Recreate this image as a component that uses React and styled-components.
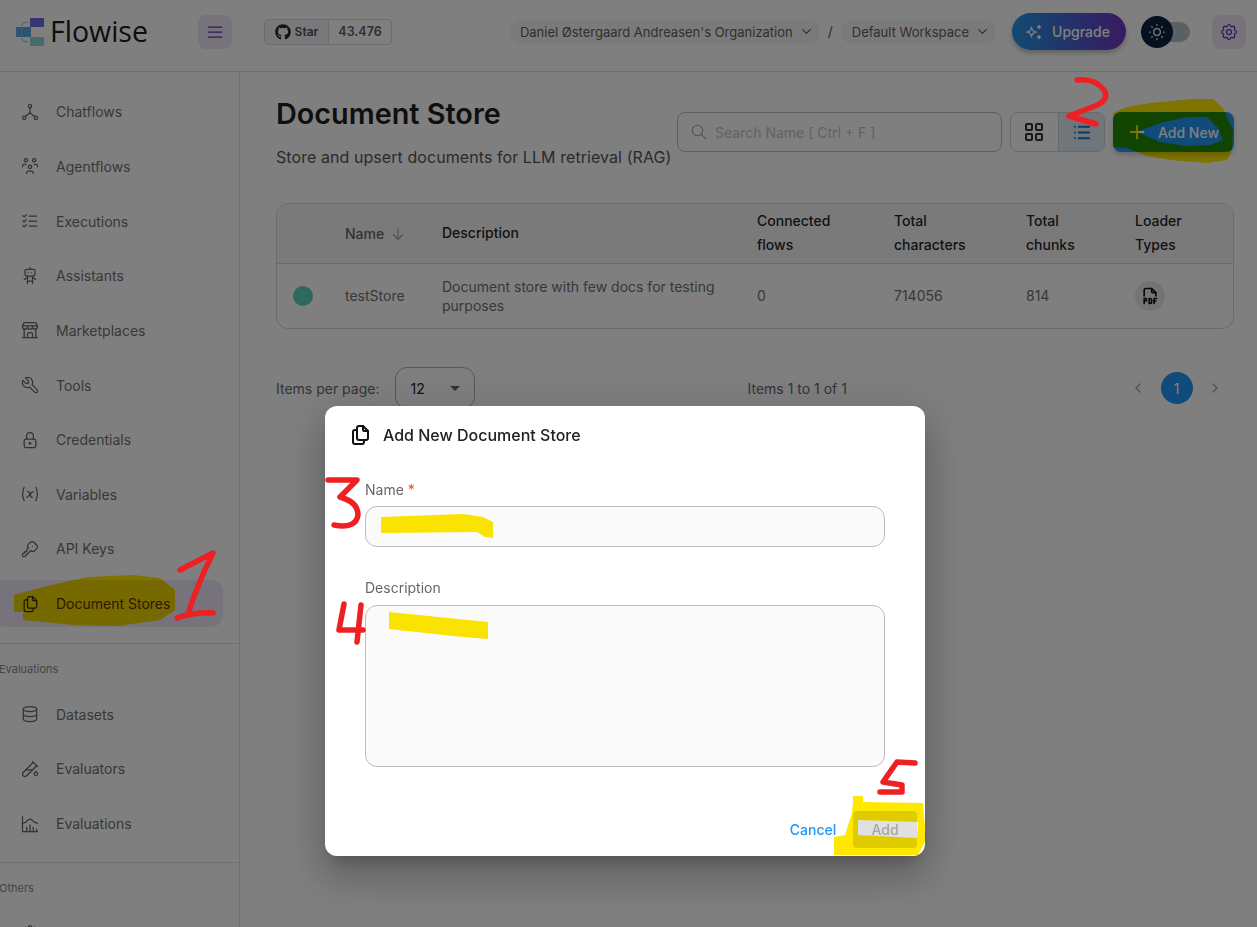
import React from 'react';
import styled, { createGlobalStyle } from 'styled-components';
import { FaGithub } from 'react-icons/fa';
import {
  TbHierarchy, TbUsersGroup, TbListCheck, TbRobot, TbBuildingStore, TbTool, TbLock, TbVariable,
  TbKey, TbFiles, TbDatabase, TbTestPipe, TbChartHistogram, TbSettings, TbMenu2, TbChevronDown,
  TbSparkles, TbSun, TbSearch, TbLayoutGrid, TbList, TbPlus, TbArrowDown, TbFileTypePdf,
  TbChevronLeft, TbChevronRight,
} from 'react-icons/tb';

const GlobalStyle = createGlobalStyle`
  html, body {
    margin: 0;
    height: 927px;
    overflow: hidden;
    background: #fff;
    font-family: Inter, "Liberation Sans", sans-serif;
  }
  * { box-sizing: border-box; }
`;

const Page = styled.div`
  width: 1257px;
  height: 927px;
  overflow: hidden;
  display: flex;
  flex-direction: column;
`;

const Header = styled.header`
  height: 72px;
  flex: none;
  display: flex;
  align-items: center;
  padding: 0 11px 8px 16px;
  border-bottom: 1px solid #e0e0e0;
`;

const Brand = styled.div`
  width: 182px;
  display: flex;
  align-items: center;
  gap: 5px;
`;

const BrandName = styled.span`
  font-family: "Open Sans", sans-serif;
  font-size: 28.5px;
  color: #1c1c1c;
  line-height: 1;
`;

const SoftButton = styled.div`
  width: 34px;
  height: 34px;
  border-radius: 8px;
  background: #ede7f6;
  color: #5e35b1;
  display: flex;
  align-items: center;
  justify-content: center;
  svg { stroke-width: 1.5; }
`;

const StarBox = styled.div`
  margin-left: 32px;
  height: 26px;
  display: flex;
  border: 1px solid #d5d8dc;
  border-radius: 4px;
  font-size: 12px;
  font-weight: 600;
  color: #57606a;
`;

const StarLabel = styled.div`
  width: 64px;
  display: flex;
  align-items: center;
  justify-content: center;
  gap: 4px;
  background: #f1f3f5;
  border-right: 1px solid #d5d8dc;
  color: #4c535b;
  svg { color: #24292f; }
`;

const StarCount = styled.div`
  width: 62px;
  display: flex;
  align-items: center;
  justify-content: center;
  font-size: 12.5px;
`;

const RightGroup = styled.div`
  margin-left: auto;
  display: flex;
  align-items: center;
`;

const Pill = styled.div`
  height: 24px;
  padding: 0 6px 0 11px;
  display: flex;
  align-items: center;
  gap: 6px;
  border-radius: 12px;
  background: #f5f5f5;
  font-size: 13px;
  color: #5f5f5f;
  white-space: nowrap;
`;

const Slash = styled.span`
  width: 21px;
  text-align: center;
  font-size: 14px;
  color: #616161;
`;

const Upgrade = styled.div`
  margin-left: 16px;
  width: 114px;
  height: 37px;
  padding-right: 4px;
  border-radius: 19px;
  display: flex;
  align-items: center;
  justify-content: center;
  gap: 8px;
  font-size: 14px;
  font-weight: 500;
  color: #fff;
  background: linear-gradient(90deg, #2196e8, #6f35c0);
  box-shadow: 0 3px 5px rgba(0, 0, 0, 0.25);
  svg { stroke-width: 1.5; }
`;

const Switch = styled.div`
  margin: 0 22px 0 15px;
  width: 49px;
  height: 32px;
  position: relative;
  display: flex;
  align-items: center;
  justify-content: flex-end;
`;

const SwitchTrack = styled.div`
  width: 34px;
  height: 20px;
  border-radius: 10px;
  background: #b5c2c8;
`;

const SwitchKnob = styled.div`
  position: absolute;
  left: 0;
  top: 0;
  width: 32px;
  height: 32px;
  border-radius: 50%;
  background: #0a2240;
  color: #fff;
  display: flex;
  align-items: center;
  justify-content: center;
  svg { stroke-width: 1.5; }
`;

const Body = styled.div`
  flex: 1;
  min-height: 0;
  display: flex;
`;

const Sidebar = styled.aside`
  width: 240px;
  flex: none;
  padding: 16.4px 16px 0 0;
  border-right: 1px solid #e0e0e0;
  overflow: hidden;
`;

const NavItem = styled.div`
  height: 46.67px;
  margin: 0 0 8px -6px;
  padding-left: 26px;
  display: flex;
  align-items: center;
  gap: 16px;
  font-size: 14px;
  border-radius: 12px;
  color: ${(p) => (p.$active ? '#5e35b1' : '#707070')};
  background: ${(p) => (p.$active ? '#ede7f6' : 'transparent')};
  svg {
    flex: none;
    stroke-width: 1.5;
    color: ${(p) => (p.$active ? '#333' : '#666')};
  }
`;

const NavDivider = styled.div`
  margin: ${(p) => p.$gap}px -16px 0 0;
  border-top: 1px solid #e0e0e0;
`;

const NavCaption = styled.div`
  margin: 19px 0 15px -1px;
  height: 13px;
  line-height: 13px;
  font-size: 11px;
  color: #8a8a8a;
`;

const Main = styled.main`
  flex: 1;
  min-width: 0;
  padding: 25px 23px 0 36px;
`;

const TopRow = styled.div`
  height: 106px;
  display: flex;
  align-items: flex-start;
`;

const TitleBlock = styled.div`
  flex: none;
`;

const Title = styled.h1`
  margin: 0;
  font-size: 28.8px;
  line-height: 34px;
  font-weight: 600;
  color: #1f1f1f;
`;

const Subtitle = styled.p`
  margin: 17px 0 0;
  font-size: 16px;
  letter-spacing: 0.07px;
  line-height: 18px;
  color: #555;
`;

const Controls = styled.div`
  margin: 15px 0 0 auto;
  display: flex;
  gap: 8px;
`;

const Search = styled.div`
  width: 325px;
  height: 40px;
  padding-left: 12px;
  display: flex;
  align-items: center;
  gap: 7px;
  border: 1px solid #bdbdbd;
  border-radius: 8px;
  font-size: 14px;
  color: #c4c4c4;
  svg { color: #a8a8a8; stroke-width: 1.5; }
`;

const Toggle = styled.div`
  display: flex;
  height: 40px;
  border: 1px solid #d0d0d0;
  border-radius: 8px;
  overflow: hidden;
`;

const ToggleCell = styled.div`
  width: 46.5px;
  display: flex;
  align-items: center;
  justify-content: center;
  color: ${(p) => (p.$on ? '#1976d2' : '#333')};
  background: ${(p) => (p.$on ? '#e3ecf5' : 'transparent')};
  border-left: ${(p) => (p.$on ? '1px solid #d0d0d0' : 'none')};
`;

const AddNew = styled.div`
  width: 121px;
  height: 40px;
  padding-right: 2px;
  border-radius: 8px;
  background: #2196f3;
  color: #fff;
  display: flex;
  align-items: center;
  justify-content: center;
  gap: 10px;
  font-size: 14px;
  font-weight: 500;
  box-shadow: 0 3px 5px rgba(0, 0, 0, 0.2);
`;

const Table = styled.div`
  width: 958px;
  border: 1px solid #d6d6d6;
  border-radius: 12px;
  overflow: hidden;
  font-size: 14px;
`;

const Row = styled.div`
  display: grid;
  grid-template-columns: 52px 97px 315px 137px 132px 109px 1fr;
  align-items: center;
`;

const HeadRow = styled(Row)`
  height: 60px;
  padding-bottom: 2px;
  background: #f5f5f5;
  border-bottom: 1px solid #d6d6d6;
  color: #262626;
  font-weight: 500;
  line-height: 24px;
`;

const DataRow = styled(Row)`
  height: 64px;
  color: #707070;
  line-height: 19.5px;
`;

const Cell = styled.div`
  padding-left: 16px;
  padding-right: 16px;
`;

const SortCell = styled(Cell)`
  display: flex;
  align-items: center;
  gap: 5px;
  color: #666;
  padding-top: 2px;
  svg { color: #999; stroke-width: 1.5; }
`;

const StatusDot = styled.div`
  width: 20px;
  height: 20px;
  border-radius: 50%;
  background: #5fd0bd;
`;

const Loader = styled.div`
  width: 30px;
  height: 30px;
  border-radius: 50%;
  background: #e8e8e8;
  color: #111;
  display: flex;
  align-items: center;
  justify-content: center;
`;

const Pager = styled.div`
  width: 958px;
  margin-top: 38px;
  height: 42px;
  padding-right: 11px;
  display: flex;
  align-items: center;
  font-size: 14px;
  color: #6a6a6a;
`;

const PerPage = styled.div`
  width: 80px;
  height: 42px;
  margin-left: 16px;
  padding: 0 14px;
  display: flex;
  align-items: center;
  justify-content: space-between;
  border: 1px solid #b0b0b0;
  border-radius: 12px;
  color: #222;
`;

const Caret = styled.span`
  width: 0;
  height: 0;
  border-left: 5px solid transparent;
  border-right: 5px solid transparent;
  border-top: 5px solid #666;
`;

const Range = styled.div`
  margin-left: 272px;
`;

const Pages = styled.div`
  margin-left: auto;
  display: flex;
  align-items: center;
  gap: 14.5px;
  color: #a8a8a8;
`;

const PageNumber = styled.div`
  width: 32px;
  height: 32px;
  border-radius: 50%;
  background: #2196f3;
  color: #fff;
  display: flex;
  align-items: center;
  justify-content: center;
`;

const Overlay = styled.div`
  position: fixed;
  inset: 0;
  padding: 406px 0 0 325px;
  background: rgba(0, 0, 0, 0.5);
`;

const Modal = styled.div`
  width: 600px;
  height: 450px;
  background: #fff;
  border-radius: 12px;
  display: flex;
  flex-direction: column;
  box-shadow: 0 11px 15px -7px rgba(0, 0, 0, 0.2), 0 24px 38px 3px rgba(0, 0, 0, 0.14),
    0 9px 46px 8px rgba(0, 0, 0, 0.12);
`;

const ModalTitle = styled.div`
  height: 58px;
  padding-left: 23px;
  display: flex;
  align-items: center;
  gap: 11px;
  font-size: 16px;
  font-weight: 500;
  color: #212121;
`;

const Form = styled.div`
  padding: 17px 40px 0;
  flex: 1;
`;

const Label = styled.div`
  height: 17px;
  line-height: 17px;
  font-size: 14px;
  color: #666;
  margin-bottom: ${(p) => p.$gap}px;
`;

const Required = styled.span`
  color: #f44336;
`;

const Field = styled.div`
  height: ${(p) => p.$height}px;
  margin-bottom: 32px;
  background: #fafafa;
  border: 1px solid #bdbdbd;
  border-radius: 12px;
`;

const Actions = styled.div`
  padding: 0 8px 8px;
  display: flex;
  justify-content: flex-end;
  align-items: center;
  gap: 9px;
  font-size: 14px;
  font-weight: 500;
`;

const Cancel = styled.div`
  width: 62px;
  text-align: center;
  color: #2196f3;
`;

const Add = styled.div`
  width: 64px;
  height: 37px;
  border-radius: 4px;
  background: #e0e0e0;
  color: #a6a6a6;
  display: flex;
  align-items: center;
  justify-content: center;
`;

const Highlighter = styled.svg`
  position: fixed;
  inset: 0;
  pointer-events: none;
  mix-blend-mode: multiply;
  fill: #ffe800;
  fill-rule: evenodd;
`;

const RedPen = styled.svg`
  position: fixed;
  inset: 0;
  pointer-events: none;
  fill: none;
  stroke: #ee2024;
  stroke-width: 5.5px;
  stroke-linecap: round;
  stroke-linejoin: round;
`;

const navTop = [
  ['Chatflows', TbHierarchy],
  ['Agentflows', TbUsersGroup],
  ['Executions', TbListCheck],
  ['Assistants', TbRobot],
  ['Marketplaces', TbBuildingStore],
  ['Tools', TbTool],
  ['Credentials', TbLock],
  ['Variables', TbVariable],
  ['API Keys', TbKey],
  ['Document Stores', TbFiles],
];

const navEval = [
  ['Datasets', TbDatabase],
  ['Evaluators', TbTestPipe],
  ['Evaluations', TbChartHistogram],
];

const highlights = [
  'M14 595 L43 587 L87 577 L133 575 L160 578 L175 590 L175 610 L160 620 L117 626 L73 625 L23 620 L23 612 L14 612 Z',
  'M1113 113 L1127 107 L1150 103 L1193 99 L1213 99 L1223 108 L1233 130 L1232 150 L1227 160 L1207 163 L1170 160 L1147 156 L1127 148 L1113 147 Z M1137 132 L1160 123 L1187 117 L1207 117 L1218 128 L1223 140 L1210 145 L1187 146 L1160 142 Z',
  'M381 517 L463 514 L483 517 L493 522 L493 538 L485 537 L477 532 L381 533 Z',
  'M389 612 L488 622 L488 639 L453 636 L389 629 Z',
  'M853 802 L853 796 L863 796 L863 802 L923 803 L926 840 L918 855 L834 855 L834 837 L845 835 L852 813 Z M858 820 L918 822 L917 838 L858 835 Z',
];

const penStrokes = [
  'M180 570 L213 553 Q197 585 188 614 M177 618 Q195 612 213 613',
  'M1077 80 Q1095 78 1104 90 Q1110 100 1095 106 L1069 116 L1096 124',
  'M328 480 L357 480 L340 497 Q358 502 358 515 Q356 529 334 525',
  'M344 604 L339 630 L363 630 M361 605 L357 642',
  'M915 763 L897 762 L883 782 L902 785 L902 792 L880 792',
];

export default function App() {
  return (
    <>
      <GlobalStyle />
      <Page>
        <Header>
          <Brand>
            <svg width="29" height="30" viewBox="0 0 29 30">
              <rect x="14" y="1" width="14" height="9" rx="1" fill="#6a6ae6" />
              <rect x="0" y="10" width="15" height="10" rx="1" fill="#5ca8e4" />
              <rect x="14" y="20" width="14" height="9" rx="1" fill="#8fd4d6" />
              <path d="M5 9 Q7 5 12 5 M5 21 Q7 25 12 25" fill="none" stroke="#8fb8d0" strokeWidth="1" />
            </svg>
            <BrandName>Flowise</BrandName>
          </Brand>
          <SoftButton><TbMenu2 size={20} /></SoftButton>
          <StarBox>
            <StarLabel><FaGithub size={16} />Star</StarLabel>
            <StarCount>43.476</StarCount>
          </StarBox>
          <RightGroup>
            <Pill>Daniel Østergaard Andreasen's Organization<TbChevronDown size={15} /></Pill>
            <Slash>/</Slash>
            <Pill>Default Workspace<TbChevronDown size={15} /></Pill>
            <Upgrade><TbSparkles size={20} />Upgrade</Upgrade>
            <Switch>
              <SwitchTrack />
              <SwitchKnob><TbSun size={20} /></SwitchKnob>
            </Switch>
            <SoftButton><TbSettings size={20} /></SoftButton>
          </RightGroup>
        </Header>
        <Body>
          <Sidebar>
            {navTop.map(([label, Icon]) => (
              <NavItem key={label} $active={label === 'Document Stores'}>
                <Icon size={20} />{label}
              </NavItem>
            ))}
            <NavDivider $gap={16} />
            <NavCaption>Evaluations</NavCaption>
            {navEval.map(([label, Icon]) => (
              <NavItem key={label}><Icon size={20} />{label}</NavItem>
            ))}
            <NavDivider $gap={15} />
            <NavCaption>Others</NavCaption>
            <NavItem><TbSettings size={20} /></NavItem>
          </Sidebar>
          <Main>
            <TopRow>
              <TitleBlock>
                <Title>Document Store</Title>
                <Subtitle>Store and upsert documents for LLM retrieval (RAG)</Subtitle>
              </TitleBlock>
              <Controls>
                <Search><TbSearch size={18} />Search Name [ Ctrl + F ]</Search>
                <Toggle>
                  <ToggleCell><TbLayoutGrid size={24} /></ToggleCell>
                  <ToggleCell $on><TbList size={23} /></ToggleCell>
                </Toggle>
                <AddNew><TbPlus size={22} />Add New</AddNew>
              </Controls>
            </TopRow>
            <Table>
              <HeadRow>
                <Cell />
                <SortCell>Name <TbArrowDown size={18} /></SortCell>
                <Cell>Description</Cell>
                <Cell>Connected flows</Cell>
                <Cell>Total characters</Cell>
                <Cell>Total chunks</Cell>
                <Cell>Loader Types</Cell>
              </HeadRow>
              <DataRow>
                <Cell><StatusDot /></Cell>
                <Cell>testStore</Cell>
                <Cell>Document store with few docs for testing purposes</Cell>
                <Cell>0</Cell>
                <Cell>714056</Cell>
                <Cell>814</Cell>
                <Cell><Loader><TbFileTypePdf size={20} /></Loader></Cell>
              </DataRow>
            </Table>
            <Pager>
              Items per page:
              <PerPage>12<Caret /></PerPage>
              <Range>Items 1 to 1 of 1</Range>
              <Pages>
                <TbChevronLeft size={16} />
                <PageNumber>1</PageNumber>
                <TbChevronRight size={16} />
              </Pages>
            </Pager>
          </Main>
        </Body>
      </Page>
      <Overlay>
        <Modal>
          <ModalTitle><TbFiles size={24} color="#111" />Add New Document Store</ModalTitle>
          <Form>
            <Label $gap={8}>Name <Required>*</Required></Label>
            <Field $height={41} />
            <Label $gap={9}>Description</Label>
            <Field $height={162} />
          </Form>
          <Actions>
            <Cancel>Cancel</Cancel>
            <Add>Add</Add>
          </Actions>
        </Modal>
      </Overlay>
      <Highlighter width="1257" height="927" viewBox="0 0 1257 927">
        {highlights.map((d) => <path key={d} d={d} />)}
      </Highlighter>
      <RedPen width="1257" height="927" viewBox="0 0 1257 927">
        {penStrokes.map((d) => <path key={d} d={d} />)}
      </RedPen>
    </>
  );
}
